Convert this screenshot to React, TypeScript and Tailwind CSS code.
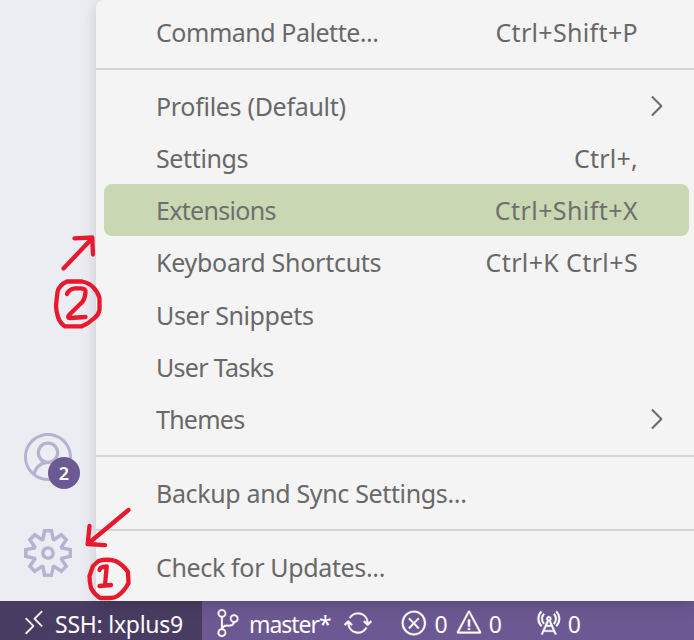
import {
  VscAccount,
  VscChevronRight,
  VscError,
  VscRadioTower,
  VscRemote,
  VscSettingsGear,
  VscSourceControl,
  VscSync,
  VscWarning,
} from "react-icons/vsc";

type Item = { label: string; track: string; keys?: string; keyTrack?: string; sub?: boolean; active?: boolean };

const first: Item[] = [
  { label: "Command Palette...", track: "tracking-[-0.47px]", keys: "Ctrl+Shift+P", keyTrack: "tracking-[0.33px]" },
];
const second: Item[] = [
  { label: "Profiles (Default)", track: "tracking-[-0.3px]", sub: true },
  { label: "Settings", track: "tracking-[-0.37px]", keys: "Ctrl+,", keyTrack: "tracking-[0.25px]" },
  { label: "Extensions", track: "tracking-[-0.7px]", keys: "Ctrl+Shift+X", keyTrack: "tracking-[0.42px]", active: true },
  { label: "Keyboard Shortcuts", track: "tracking-[-0.27px]", keys: "Ctrl+K Ctrl+S", keyTrack: "tracking-[0.38px]" },
  { label: "User Snippets", track: "tracking-[-0.4px]" },
  { label: "User Tasks", track: "tracking-[-0.7px]" },
  { label: "Themes", track: "tracking-[-0.75px]", sub: true },
];

function Row({ item }: { item: Item }) {
  return (
    <li
      className={`ml-2 mr-[5px] flex h-[52.17px] items-center whitespace-nowrap rounded-lg pl-[52px] pt-[2px] ${
        item.active ? "bg-[#c9d7b3] text-[#6f6f6f]" : "text-[#686868]"
      }`}
    >
      <span className={item.track}>{item.label}</span>
      {item.keys && <span className={`ml-auto pr-[51px] ${item.keyTrack}`}>{item.keys}</span>}
      {item.sub && <VscChevronRight className="mb-[2px] ml-auto mr-[17px] size-8 stroke-[0.2]" />}
    </li>
  );
}

function Separator() {
  return (
    <li className="flex h-[22px] items-center">
      <span className="h-[2px] w-full bg-[#d4d4d4]" />
    </li>
  );
}

const statusIcon = "mb-[3px] size-7 shrink-0 stroke-[0.2]";

export default function App() {
  return (
    <div className="relative flex h-[640px] w-[694px] flex-col overflow-hidden bg-[#f4f4f4] font-['Noto_Sans','Open_Sans',sans-serif] text-[25px]">
      <div className="flex h-[601px] bg-[#ecedf3]">
        <aside className="flex w-24 flex-col items-center justify-end gap-12 pb-6 text-[#b7b2cf]">
          <div className="relative size-12">
            <VscAccount className="size-12" />
            <span className="absolute left-6 top-6 flex size-8 items-center justify-center rounded-full bg-[#6c5892] text-[18px] font-semibold text-white">
              2
            </span>
          </div>
          <VscSettingsGear className="size-12" />
        </aside>
        <ul className="z-10 h-[601px] flex-1 rounded-tl-[8px] bg-[#f4f4f4] pt-[5.5px] shadow-[0_4px_16px_rgba(0,0,0,0.16)]">
          {first.map((i) => <Row key={i.label} item={i} />)}
          <Separator />
          {second.map((i) => <Row key={i.label} item={i} />)}
          <Separator />
          <Row item={{ label: "Backup and Sync Settings...", track: "tracking-[-0.35px]" }} />
          <Separator />
          <Row item={{ label: "Check for Updates...", track: "tracking-[-0.35px]" }} />
        </ul>
      </div>
      <footer className="flex h-[39px] items-center whitespace-nowrap bg-[#6c5892] pt-2 text-[23px] text-white">
        <div className="-mt-2 flex h-[39px] w-[202px] items-center bg-[#493c62] pl-5 pt-2">
          <VscRemote className={statusIcon} />
          <span className="ml-[7px] tracking-[-0.25px]">SSH: lxplus9</span>
        </div>
        <VscSourceControl className={`ml-3 ${statusIcon}`} />
        <span className="ml-[7px] tracking-[-1.05px]">master*</span>
        <VscSync className={`ml-[13px] ${statusIcon}`} />
        <VscError className={`ml-[28px] ${statusIcon}`} />
        <span className="ml-[7px]">0</span>
        <VscWarning className={`ml-[7px] ${statusIcon}`} />
        <span className="ml-[6px]">0</span>
        <VscRadioTower className={`ml-[32px] ${statusIcon}`} />
        <span className="ml-[6px]">0</span>
      </footer>
      <svg
        className="pointer-events-none absolute inset-0 z-20"
        width="694"
        height="640"
        fill="none"
        stroke="#e8192c"
        strokeWidth="4.3"
        strokeLinecap="round"
        strokeLinejoin="round"
      >
        <path d="M63.500 268.500 92 238.500M74.500 238.300 92.300 237.500l.7 17" />
        <path d="M67 281.500h15q7 1.500 11 5.500 5 5 6.500 11v12q-1 5-5 8-6 5.500-12.500 8.300H65q-5-3-7-9.300-2-6-2-12l1.500-13q1.500-7 9.500-10.500Z" />
        <path d="M67 294q2-5 8-5.700h6q5 0 4.500 4-.5 6-3 9.500L69 315q-2 3 1 3l15.500-1" />
        <path d="M128.500 510 87.700 544M89.500 526l-1.800 18 17.300 1.200" />
        <path d="M98.500 561q8-2.500 17 0 8 4 12.500 11l.5 11q-4 8-11 13-3 2-7 2H100q-6-4-9-10-1.500-6-1.500-12l3.500-10Z" />
        <path d="M99.500 570q0-3 7.200-3.500L105 585M99.500 586l11.500-1" />
      </svg>
    </div>
  );
}
